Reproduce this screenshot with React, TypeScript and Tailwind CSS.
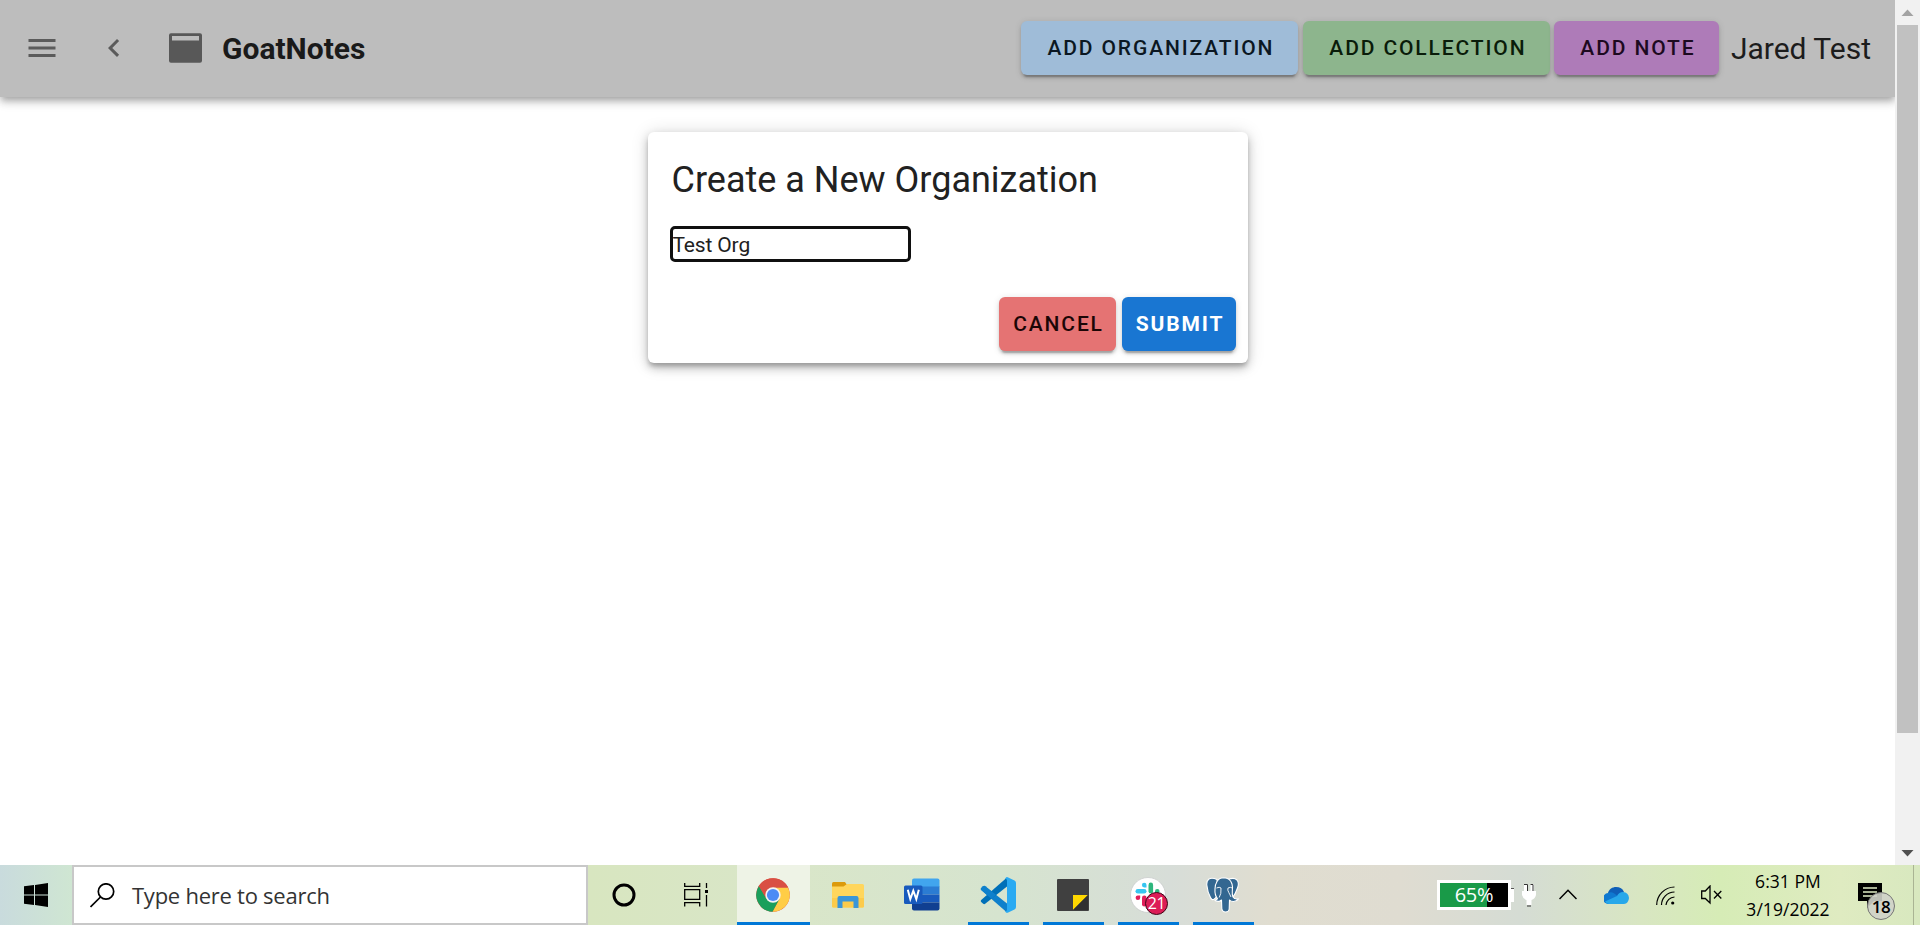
import type { ReactNode } from "react";

const raised =
  "shadow-[0_4.5px_1.5px_-3px_rgba(0,0,0,0.2),0_3px_3px_rgba(0,0,0,0.14),0_1.5px_7.5px_rgba(0,0,0,0.12)]";

function Header() {
  return (
    <header className="relative z-10 flex h-[97px] w-full shrink-0 items-center bg-[#bdbdbd] pb-[2px] pl-6 pr-6 shadow-[0_3px_6px_-1.5px_rgba(0,0,0,0.2),0_6px_7.5px_rgba(0,0,0,0.14),0_1.5px_15px_rgba(0,0,0,0.12)]">
      <svg className="size-9 fill-[#5b5b5b]" viewBox="0 0 24 24">
        <path d="M3 6h18v2H3V6m0 5h18v2H3v-2m0 5h18v2H3v-2Z" />
      </svg>
      <svg className="ml-9 size-9 fill-[#5b5b5b]" viewBox="0 0 24 24">
        <path d="M15.41 16.58 10.83 12l4.58-4.59L14 6l-6 6 6 6 1.41-1.42Z" />
      </svg>
      <svg className="ml-[37px] h-[30px] w-[33px] fill-[#585858]" viewBox="0 0 33 30">
        <path
          fillRule="evenodd"
          d="M2 .3h29a2 2 0 0 1 2 2v25.400a2 2 0 0 1-2 2H2a2 2 0 0 1-2-2V2.300a2 2 0 0 1 2-2ZM3 3v4.500h27V3Z"
        />
      </svg>
      <h1 className="ml-[20px] pt-[2px] text-[30px] font-bold leading-9 text-[#1a1a1a]">GoatNotes</h1>
      <div className="ml-auto flex items-center">
        <button className={`h-[54px] w-[277px] rounded-[6px] bg-[#9fbcd8] pl-[3px] pt-[3px] text-[21px] font-medium tracking-[1.875px] text-[#0b1722] ${raised}`}>
          ADD ORGANIZATION
        </button>
        <button className={`ml-[5px] h-[54px] w-[247px] rounded-[6px] bg-[#8db58d] pl-[3px] pt-[3px] text-[21px] font-medium tracking-[1.875px] text-[#0a1c0a] ${raised}`}>
          ADD COLLECTION
        </button>
        <button className={`ml-1 h-[54px] w-[165px] rounded-[6px] bg-[#ae7bb8] pl-[3px] pt-[3px] text-[21px] font-medium tracking-[1.875px] text-[#1d0a20] ${raised}`}>
          ADD NOTE
        </button>
        <span className="ml-3 pt-[2px] text-[30px] leading-9 text-[#1c1c1c]">Jared Test</span>
      </div>
    </header>
  );
}

function OrganizationCard() {
  return (
    <section className="mt-[35px] flex h-[231px] w-[600px] flex-col rounded-[6px] bg-white shadow-[0_4.5px_4.5px_-1.5px_rgba(0,0,0,0.2),0_4.5px_10px_rgba(0,0,0,0.2),0_1.5px_18px_rgba(0,0,0,0.14)]">
      <h2 className="mt-6 pl-6 text-[36px] leading-[48px] text-[#212121]">Create a New Organization</h2>
      <input
        className="ml-[22px] mt-[22px] h-[36px] w-[241px] rounded-[5px] border-[3px] border-[#101010] bg-white pt-[1px] text-[21px] tracking-[-0.15px] text-[#212121] outline-none"
        defaultValue="Test Org"
      />
      <div className="mb-3 mr-3 mt-auto flex justify-end gap-[6px]">
        <button className={`h-[54px] w-[117px] rounded-[6px] bg-[#e57373] pl-[3px] pt-[2px] text-[21px] font-medium tracking-[1.875px] text-[#1c0606] ${raised}`}>
          CANCEL
        </button>
        <button className={`h-[54px] w-[114px] rounded-[6px] bg-[#1976d2] pl-[3px] pt-[2px] text-[21px] font-bold tracking-[1.875px] text-white ${raised}`}>
          SUBMIT
        </button>
      </div>
    </section>
  );
}

function Scrollbar() {
  return (
    <div className="flex h-full w-[25px] shrink-0 flex-col items-center bg-[#f1f1f1]">
      <svg className="h-[25px] w-[25px] shrink-0 fill-[#a3a3a3]" viewBox="0 0 25 25">
        <path d="M6.500 16 12.500 9.500 18.500 16Z" />
      </svg>
      <div className="h-[708px] w-[21px] bg-[#c1c1c1]" />
      <svg className="mt-auto h-[25px] w-[25px] shrink-0 fill-[#505050]" viewBox="0 0 25 25">
        <path d="M6.500 10 12.500 16.500 18.500 10Z" />
      </svg>
    </div>
  );
}

function TaskItem({ children, running, active }: { children: ReactNode; running?: boolean; active?: boolean }) {
  return (
    <div className={`mr-[2px] flex h-[60px] w-[73px] flex-col items-center ${active ? "bg-[#eef3e6]" : ""}`}>
      <div className="flex h-[57px] w-full items-center justify-center pr-[1px] pt-[2px]">{children}</div>
      {running && <div className={`h-[3px] bg-[#0078d7] ${active ? "w-full" : "w-[61px]"}`} />}
    </div>
  );
}

function ChromeIcon() {
  return (
    <svg className="size-[34px]" viewBox="0 0 34 34">
      <circle cx="17" cy="17" r="16.800" fill="#dd5144" />
      <path d="M17 17V9.500H32A16.800 16.800 0 0 1 16.500 33.800L23.500 20.700Z" fill="#ffcd46" />
      <path d="M2.900 8A16.800 16.800 0 0 0 16.500 33.800L23.400 21 10.500 20.700Z" fill="#1a9f5c" />
      <path d="M17 9.500H32.100A16.800 16.800 0 0 0 2.900 8L10.500 20.700Z" fill="#d94f43" />
      <circle cx="17" cy="17" r="7.700" fill="#f3f3f3" />
      <circle cx="17" cy="17" r="6.100" fill="#4c8bf5" />
    </svg>
  );
}

function ExplorerIcon() {
  return (
    <svg className="h-[28px] w-8" viewBox="0 0 32 28">
      <path d="M0 2.500Q0 1 1.500 1H13l2 3v5H0Z" fill="#dc9a0c" />
      <path d="M0 5.500h11.500L15 3h15.500Q32 3 32 4.500V25q0 1.500-1.500 1.500h-29Q0 26.500 0 25Z" fill="#ffd65c" />
      <path d="M0 17h32v8q0 1.500-1.500 1.500h-29Q0 26.500 0 25Z" fill="#fccb4b" />
      <path d="M5.500 27V17q0-2 2-2h17q2 0 2 2v10h-5v-6.500h-11V27Z" fill="#3a96d8" />
    </svg>
  );
}

function WordIcon() {
  return (
    <svg className="-ml-[2px] h-[33px] w-9" viewBox="0 0 36 33">
      <clipPath id="sheet">
        <rect x="8" y=".5" width="27.500" height="32" rx="2" />
      </clipPath>
      <g clipPath="url(#sheet)">
        <path d="M8 0h28v9H8Z" fill="#41a5ee" />
        <path d="M8 8.500h28v8H8Z" fill="#2b7cd3" />
        <path d="M8 16.500h28v8H8Z" fill="#185abd" />
        <path d="M8 24.500h28V33H8Z" fill="#103f91" />
      </g>
      <rect y="7.500" width="18.500" height="18.500" rx="1.500" fill="#185abd" />
      <path d="m3.800 11.700 2.500 9.500 3-8.500 3 8.500 2.500-9.500" fill="none" stroke="white" strokeWidth="2" />
    </svg>
  );
}

function CodeIcon() {
  return (
    <svg className="size-9" viewBox="0 0 36 36">
      <path d="m1.200 11 2-1.800q1-.7 2 0L27 26.500V35.500L1.200 13Q.2 12 1.200 11Z" fill="#0f80cc" />
      <path d="m1.200 25 2 1.800q1 .7 2 0L27 9.500V.5L1.200 23Q.2 24 1.200 25Z" fill="#0070b8" />
      <path d="m1.200 11 2-1.800q1-.7 2 0L16 17.700 11.500 22 1.200 13Q.2 12 1.200 11Z" fill="#0f80cc" />
      <path d="M26.500.200Q27 0 27.700.300L34.500 3.500Q36 4.200 36 6v24q0 1.700-1.500 2.400l-6.800 3.300q-.8.300-1.500-.1-1-.500-1-1.600 1.800.500 1.800-1.500V3.500q0-2-1.800-1.500 0-1.300 1.300-1.800Z" fill="#2aaaf2" />
    </svg>
  );
}

function StickyIcon() {
  return (
    <svg className="size-8" viewBox="0 0 32 32">
      <rect width="32" height="32" rx="1" fill="#404040" />
      <path d="M16 16h15L16 31Z" fill="#ffd800" />
      <path d="M31 16v15H16Z" fill="#303030" />
    </svg>
  );
}

function SlackIcon() {
  return (
    <div className="relative h-[36px] w-9">
      <svg className="size-9" viewBox="0 0 36 36">
        <circle cx="18" cy="18" r="17.500" fill="white" stroke="#c9cccb" strokeWidth=".8" />
        <g fill="#36c5f0">
          <rect x="5.500" y="12" width="11" height="4.600" rx="2.300" />
          <path d="M16.500 10.400h-2.300a2.300 2.300 0 1 1 2.300-2.300Z" />
        </g>
        <g fill="#2eb67d">
          <rect x="18.500" y="5.600" width="4.600" height="11" rx="2.300" />
          <path d="M25 16.600v-2.300a2.300 2.300 0 1 1 2.300 2.300Z" />
        </g>
        <g fill="#e01e5a">
          <rect x="12" y="18.500" width="4.600" height="11" rx="2.300" />
          <path d="M10.200 18.500v2.300a2.300 2.300 0 1 1-2.300-2.300Z" />
        </g>
        <g fill="#ecb22e">
          <rect x="18.500" y="18.500" width="11" height="4.600" rx="2.300" />
        </g>
      </svg>
      <span className="absolute left-[15px] top-[15px] flex size-[23px] items-center justify-center rounded-full border-[1.500px] border-[#3a0716] bg-[#dc1c56] font-['Open_Sans'] text-[16px] leading-none tracking-[-0.5px] text-white">
        21
      </span>
    </div>
  );
}

function PostgresIcon() {
  return (
    <svg className="h-9 w-[34px]" viewBox="0 0 34 36" fill="#336791" stroke="white" strokeWidth="1.100" strokeLinejoin="round">
      <path d="M11 2.500Q6 .300 3 2 .500 3.700.800 8 1.500 15 4.500 20.500q1.500 3 3.500 1.800l4-4Z" />
      <path d="M22 2.500q6-2.500 9 .500 2.500 3 .500 8-2 6-5.500 10.500l-5-1Z" />
      <path d="M11 4.500Q13 .800 18 .800 24 1 26 7q1 3 .300 7.500-.300 3 .700 5.500 1.500 2.500 5.500 1.800-2 2.700-5 2.700-3 0-4-1.500l-.300 9q-.400 3-3.700 3-3.200 0-3.700-3.500L15.500 23q-2.500 2.500-6.500.500l2.500-1.700Q8.500 18 9 12q.300-5 2-7.500Z" />
      <path d="M10.500 11q3-1.500 4.500 0 .5 6-1.800 9.500M22 11q2.500-1.300 4.300 0M22 11q-.800 2 .8 4.500 1.300 2.500 2.200 4.500" fill="none" strokeWidth=".9" />
    </svg>
  );
}

function Taskbar() {
  return (
    <footer className="flex h-[60px] w-full shrink-0 items-center bg-[linear-gradient(90deg,#c9dbdd_0px,#cfe6d2_72px,#d8e6c0_590px,#d9e6c9_800px,#d6e4cf_1000px,#d7ddd8_1170px,#e0ddd0_1270px,#dfdcd1_1400px,#d5dcd4_1520px,#d8e6c2_1640px,#d6ecb6_1720px,#dfebc1_1840px,#d8e8bf_1920px)] font-['Open_Sans',sans-serif] text-black">
      <div className="flex h-full w-[72px] items-center justify-center">
        <svg className="size-6" viewBox="0 0 24 24">
          <path d="M0 3.300 10 2v9.500H0ZM11 1.900 24 0v11.500H11ZM0 12.500h10V22L0 20.700ZM11 12.500h13V24l-13-1.900Z" />
        </svg>
      </div>
      <div className="flex h-full w-[516px] items-center border-2 border-[#c8c8c8] bg-white pl-4">
        <svg className="size-[25px]" viewBox="0 0 25 25" fill="none" stroke="black" strokeWidth="1.700">
          <circle cx="16" cy="8.500" r="7.700" />
          <path d="M10.500 14 .5 24" />
        </svg>
        <span className="ml-[17px] text-[22px] tracking-[-0.25px] text-[#333]">Type here to search</span>
      </div>
      <div className="flex h-full w-[73px] items-center justify-center pr-[2px]">
        <svg className="size-6" viewBox="0 0 24 24">
          <circle cx="12" cy="12" r="10" fill="none" stroke="black" strokeWidth="3" />
        </svg>
      </div>
      <div className="flex h-full w-[76px] items-center pl-[23px]">
        <svg className="-mt-[1px] h-6 w-[25px]" viewBox="0 0 25 24" fill="none" stroke="black" strokeWidth="1.300">
          <path d="M.7 0v3.300h15V0M.7 6.700h15v9.600H.7ZM.7 23.500v-3.800h15v3.800M22.500 0v5M22.500 12v11.500" />
          <path d="M21 7h3v3h-3Z" fill="black" stroke="none" />
        </svg>
      </div>
      <TaskItem running active><ChromeIcon /></TaskItem>
      <TaskItem><ExplorerIcon /></TaskItem>
      <TaskItem><WordIcon /></TaskItem>
      <TaskItem running><CodeIcon /></TaskItem>
      <TaskItem running><StickyIcon /></TaskItem>
      <TaskItem running><SlackIcon /></TaskItem>
      <TaskItem running><PostgresIcon /></TaskItem>

      <div className="ml-auto flex h-full w-[483px] items-center">
        <div className="flex h-[30px] w-[74px] items-center justify-center border-[3.500px] border-white bg-[linear-gradient(90deg,#199a48_47px,#000_47px)] text-[20px] leading-none tracking-[-0.3px] text-white">
          65%
        </div>
        <div className="h-[14px] w-[3px] border-t border-[#555] bg-white" />
        <svg className="ml-2 h-[23px] w-[14px] fill-white" viewBox="0 0 14 23">
          <path d="M2 0h3.500v7H2ZM8.500 0H12v7H8.500ZM0 7h14v4q-1 4-4.500 5v5h-5v-5Q1 15 0 11Z" />
          <path d="M2 .5h3.500V7M8.500.5H11V7M5 22h4" fill="none" stroke="#333" strokeWidth="1" />
        </svg>
        <svg className="ml-[23px] -mt-[2px] h-[11px] w-[18px]" viewBox="0 0 18 11" fill="none" stroke="black" strokeWidth="1.500">
          <path d="m.5 10 8.500-8.700L17.500 10" />
        </svg>
        <svg className="ml-[27px] h-[17px] w-[25px]" viewBox="0 0 25 17">
          <path d="M4 6C5 2 8.500 0 12 0q6 0 8 5l-6 7Z" fill="#0f5fb8" />
          <path d="M5 17a5 5 0 0 1-1-11q4-2 7 1l8 6-5 4Z" fill="#0f79d0" />
          <path d="M13 9q2-4 6-4 5.500.500 6 6-.500 5.500-5 6H5Q2.500 17 1 14.500Z" fill="#28a8ea" />
        </svg>
        <svg className="ml-[27px] h-[19px] w-[19px]" viewBox="0 0 19 19" fill="none" stroke="black" strokeWidth="1.200">
          <path d="M.7 19A18 18 0 0 1 18.500 1M5.500 19A13 13 0 0 1 18.500 6M10 19a9 9 0 0 1 8.500-8" />
          <circle cx="16.700" cy="17" r="1.600" fill="black" stroke="none" />
        </svg>
        <svg className="ml-[26px] h-[20px] w-[21px]" viewBox="0 0 21 20" fill="none" stroke="black" strokeWidth="1.300">
          <path d="M.7 6h3.600L9 1v17l-4.700-4.500H.7ZM13 6l7.300 7.500M20.300 6 13 13.500" />
        </svg>
        <div className="ml-[20px] flex h-full w-[92px] flex-col items-center text-[17.500px] leading-7 tracking-[0.05px]">
          <span className="mt-[2px]">6:31 PM</span>
          <span>3/19/2022</span>
        </div>
        <div className="relative ml-[24px] h-[60px] w-[37px]">
          <svg className="mt-[18px] h-[26px] w-[25px]" viewBox="0 0 25 26">
            <path d="M0 0h24v18h-8l-7 7v-7H0Z" />
            <path d="M5 5h14M5 9h14M5 13h14" stroke="#e0ebc5" strokeWidth="1.300" />
          </svg>
          <span className="absolute left-[9px] top-[27px] flex size-[28px] items-center justify-center rounded-full border-[1.500px] border-[#757575] bg-[#cfd2c9]/90 text-[17px] font-semibold leading-none tracking-[-0.5px] text-black">
            18
          </span>
        </div>
        <div className="ml-auto mr-[6px] h-full w-[1.500px] bg-[#aab494]" />
      </div>
    </footer>
  );
}

export default function App() {
  return (
    <div className="flex h-[925px] w-[1920px] flex-col overflow-hidden bg-white font-['Roboto',sans-serif]">
      <div className="flex h-[865px] w-full">
        <main className="flex min-w-0 flex-1 flex-col items-center overflow-hidden">
          <Header />
          <OrganizationCard />
        </main>
        <Scrollbar />
      </div>
      <Taskbar />
    </div>
  );
}
